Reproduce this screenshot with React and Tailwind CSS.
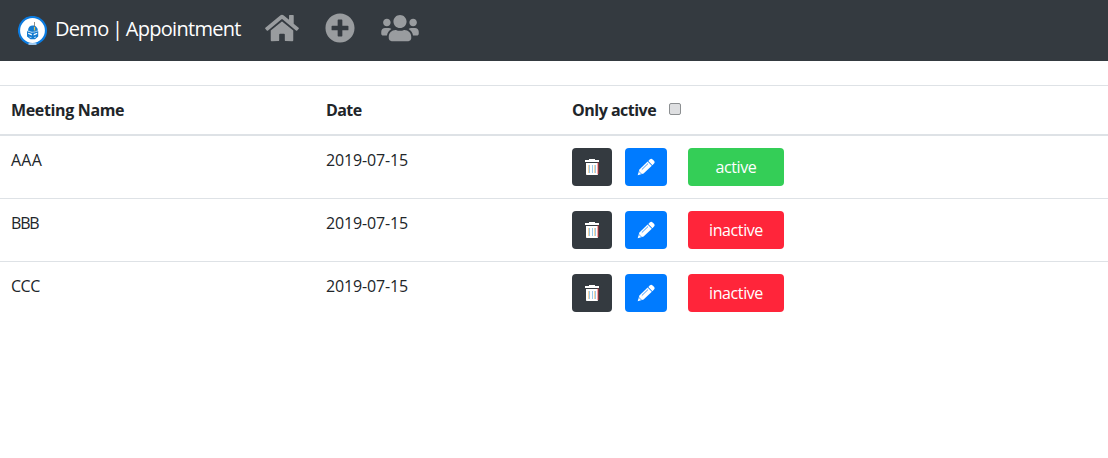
import { FaHome, FaPlusCircle, FaUsers } from "react-icons/fa";

const meetings = [
  { name: "AAA", date: "2019-07-15", active: true, tracking: "tracking-[0.200px]" },
  { name: "BBB", date: "2019-07-15", active: false, tracking: "tracking-[-1.200px]" },
  { name: "CCC", date: "2019-07-15", active: false, tracking: "tracking-[-0.500px]" },
];

function Logo() {
  return (
    <svg viewBox="0 0 30 30" className="h-[30px] w-[30px] shrink-0">
      <circle cx="14.5" cy="14.5" r="13.5" fill="#fff" stroke="#0b7be0" strokeWidth="2.2" />
      <path d="M10.500 28h8" stroke="#fff" strokeWidth="1.2" />
      <path d="M10 14.800c0-3.500 2-5.300 4.800-5.300s5 2 5 5.300l-4.800 2z" fill="#137bd0" />
      <path d="M9 15l5.700 2 5.500-2v5.600L17 23.200h-4.500L9 20.600z" fill="#137bd0" />
      <path d="M10.200 16.800l3.600 1.200v1.400l-3.600-1.300zM19.200 16.800L15.700 18v1.400l3.500-1.300zM11.500 20.600l2 .8v.7l-2-.8zM18 20.600l-2 .8v.7l2-.8z" fill="#fff" />
      <path d="M9 14.700q5.500 2.600 11.200 0" fill="none" stroke="#b7d8f1" strokeWidth=".5" />
      <path d="M16.500 6v6" stroke="#77736c" strokeWidth=".8" />
      <path d="M16.500 11v3.500" stroke="#e3c34c" strokeWidth="1.2" />
    </svg>
  );
}

function Trash() {
  return (
    <svg viewBox="0 0 16 18" className="h-[18px] w-4" fill="none">
      <path d="M5 1h6v1H5z" fill="#fff" />
      <path d="M1 2h14v2H1z" fill="#fff" />
      <path d="M2 5h12v11.200a.8.800 0 0 1-.8.800H2.800a.8.800 0 0 1-.8-.8z" fill="#fff" />
      <path d="M4.500 7v8M10.500 7v8" stroke="#fad6a5" />
      <path d="M5.500 7v8M8.500 7v8M11.500 7v8" stroke="#9dcaea" />
      <path d="M14 4.500v11.500" stroke="#ee3b40" strokeWidth=".9" />
    </svg>
  );
}

function Pencil() {
  return (
    <svg viewBox="0 0 18 18" className="h-[18px] w-[18px]">
      <path d="M11.300 2.900l1.500-1.500q1.400-1.200 2.800 0l1.400 1.400q1.200 1.400 0 2.800l-1.600 1.600z" fill="#fff" />
      <path d="M10.600 3.500l4.200 4.300-8.200 7.800L.7 17.200l1.700-5.800z" fill="#fff" />
      <path d="M4.800 11.600l6.200-6" stroke="#2b8cf5" strokeWidth=".9" />
      <path d="M2.500 13.400l.4 1.500 1.800.8" stroke="#2b8cf5" strokeWidth=".7" fill="none" />
    </svg>
  );
}

const columns = "grid grid-cols-[315px_246px_1fr] pl-[11px]";

export default function App() {
  return (
    <div className="min-h-[458px] bg-white font-['Open_Sans','Noto_Sans',sans-serif] text-base leading-6 text-[#212529]">
      <nav className="flex h-[61px] items-start bg-[#343a40] pl-[18px]">
        <a className="flex items-center pt-4 text-white">
          <Logo />
          <span className="ml-[7px] mt-[-4px] w-[188px] whitespace-nowrap text-[20px] leading-[30px] tracking-[-0.700px] [word-spacing:-1px]">Demo | Appointment</span>
        </a>
        <div className="ml-[22px] flex pt-[13px] text-[30px] text-[#999c9f]">
          <FaHome className="h-[30px] w-[34px]" />
          <FaPlusCircle className="ml-[26px] h-[30px] w-[30px]" />
          <FaUsers className="ml-[26px] h-[30px] w-[38px]" />
        </div>
      </nav>
      <main className="pt-6">
        <div className={`${columns} h-[51px] border-t border-b-2 border-[#dee2e6] pt-3 font-bold`}>
          <span className="tracking-[-0.350px]">Meeting Name</span>
          <span className="tracking-[-0.600px]">Date</span>
          <label className="flex">
            <span className="w-[97px] tracking-[-0.500px]">Only active</span>
            <input type="checkbox" className="mt-[5px] h-3 w-3 appearance-none rounded-[2px] border border-[#8c8f91] bg-[#dedfe1]" />
          </label>
        </div>
        {meetings.map((m, i) => (
          <div key={m.name} className={`${columns} pt-3 ${i < 2 ? "h-[63px] border-b border-[#dee2e6]" : "h-[62px]"}`}>
            <span className={m.tracking}>{m.name}</span>
            <span className="tracking-[-0.150px]">{m.date}</span>
            <div className="flex h-[38px] text-white">
              <button className="flex w-10 items-center justify-center rounded bg-[#343a40]"><Trash /></button>
              <button className="ml-[13px] flex w-[42px] items-center justify-center rounded bg-[#007bff]"><Pencil /></button>
              <button className={`ml-[21px] w-24 rounded tracking-[-0.400px] ${m.active ? "bg-[#34ce57]" : "bg-[#ff253a]"}`}>{m.active ? "active" : "inactive"}</button>
            </div>
          </div>
        ))}
      </main>
    </div>
  );
}
